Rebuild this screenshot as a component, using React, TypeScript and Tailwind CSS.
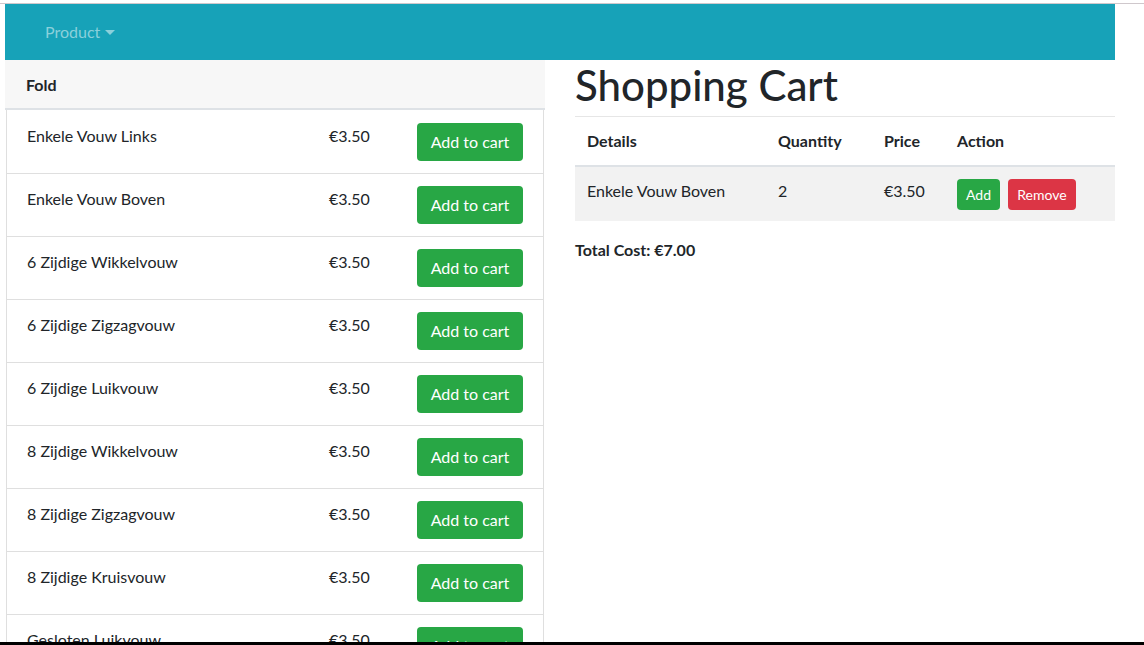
import React from "react";

const folds = [
  "Enkele Vouw Links",
  "Enkele Vouw Boven",
  "6 Zijdige Wikkelvouw",
  "6 Zijdige Zigzagvouw",
  "6 Zijdige Luikvouw",
  "8 Zijdige Wikkelvouw",
  "8 Zijdige Zigzagvouw",
  "8 Zijdige Kruisvouw",
  "Gesloten Luikvouw",
  "Open Luikvouw",
];

export default function App() {
  return (
    <div
      className="relative h-[645px] overflow-hidden bg-white text-[16px] text-[#212529]"
      style={{ fontFamily: "Lato, 'Noto Sans', sans-serif" }}
    >
      <div className="h-[3px]" />
      <div className="h-px bg-[#cfc8cc]" />

      <div className="w-[1110px] ml-[5px]">
        {/* navbar */}
        <nav className="h-[56px] bg-[#17a2b8] flex items-center pl-[40px]">
          <span className="flex items-center text-[#8bd0db] leading-6">
            Product
            <span className="ml-[5px] mt-[1px] border-x-[5px] border-x-transparent border-t-[5px] border-t-[#8bd0db]" />
          </span>
        </nav>

        <div className="flex gap-[30px]">
          {/* left: folds */}
          <div className="w-[540px] shrink-0">
            <div className="h-[50px] bg-[#f7f7f7] border-b-2 border-[#dee2e6] flex items-center pl-[21px] pt-px font-bold">
              Fold
            </div>
            <div className="ml-px w-[538px] border-x border-[#dfdfdf] pt-px">
              {folds.map((name) => (
                <div
                  key={name}
                  className="flex items-start pt-[12px] pb-[12px] pl-[20px] pr-[20px] border-b border-[#dfdfdf]"
                >
                  <div className="w-[302px] leading-6 pt-px">{name}</div>
                  <div className="w-[88px] leading-6 pt-px">€3.50</div>
                  <button className="h-[38px] w-[106px] rounded bg-[#28a745] text-white leading-6">
                    Add to cart
                  </button>
                </div>
              ))}
            </div>
          </div>

          {/* right: cart */}
          <div className="flex-1">
            <h1 className="text-[42px] font-medium leading-[50px] mb-[6px]">Shopping Cart</h1>
            <div className="h-px bg-[#e6e6e6]" />
            <table className="w-full border-collapse text-left">
              <thead>
                <tr className="border-b-2 border-[#dee2e6]">
                  <th className="w-[191px] px-3 py-3 leading-6 font-bold">Details</th>
                  <th className="w-[106px] px-3 py-3 leading-6 font-bold">Quantity</th>
                  <th className="w-[73px] px-3 py-3 leading-6 font-bold">Price</th>
                  <th className="px-3 py-3 leading-6 font-bold">Action</th>
                </tr>
              </thead>
              <tbody>
                <tr className="bg-[#f2f2f2] align-top">
                  <td className="px-3 pt-3 pb-[11px] leading-6">Enkele Vouw Boven</td>
                  <td className="px-3 pt-3 pb-[11px] leading-6">2</td>
                  <td className="px-3 pt-3 pb-[11px] leading-6">€3.50</td>
                  <td className="px-3 pt-3 pb-[11px]">
                    <div className="flex gap-2">
                      <button className="h-[31px] w-[43px] rounded bg-[#28a745] text-white text-[14px]">
                        Add
                      </button>
                      <button className="h-[31px] w-[68px] rounded bg-[#dc3545] text-white text-[14px]">
                        Remove
                      </button>
                    </div>
                  </td>
                </tr>
              </tbody>
            </table>
            <p className="mt-4 pt-px font-bold leading-6">Total Cost: €7.00</p>
          </div>
        </div>
      </div>

      <div className="absolute bottom-0 left-0 h-[3px] w-full bg-black" />
    </div>
  );
}
